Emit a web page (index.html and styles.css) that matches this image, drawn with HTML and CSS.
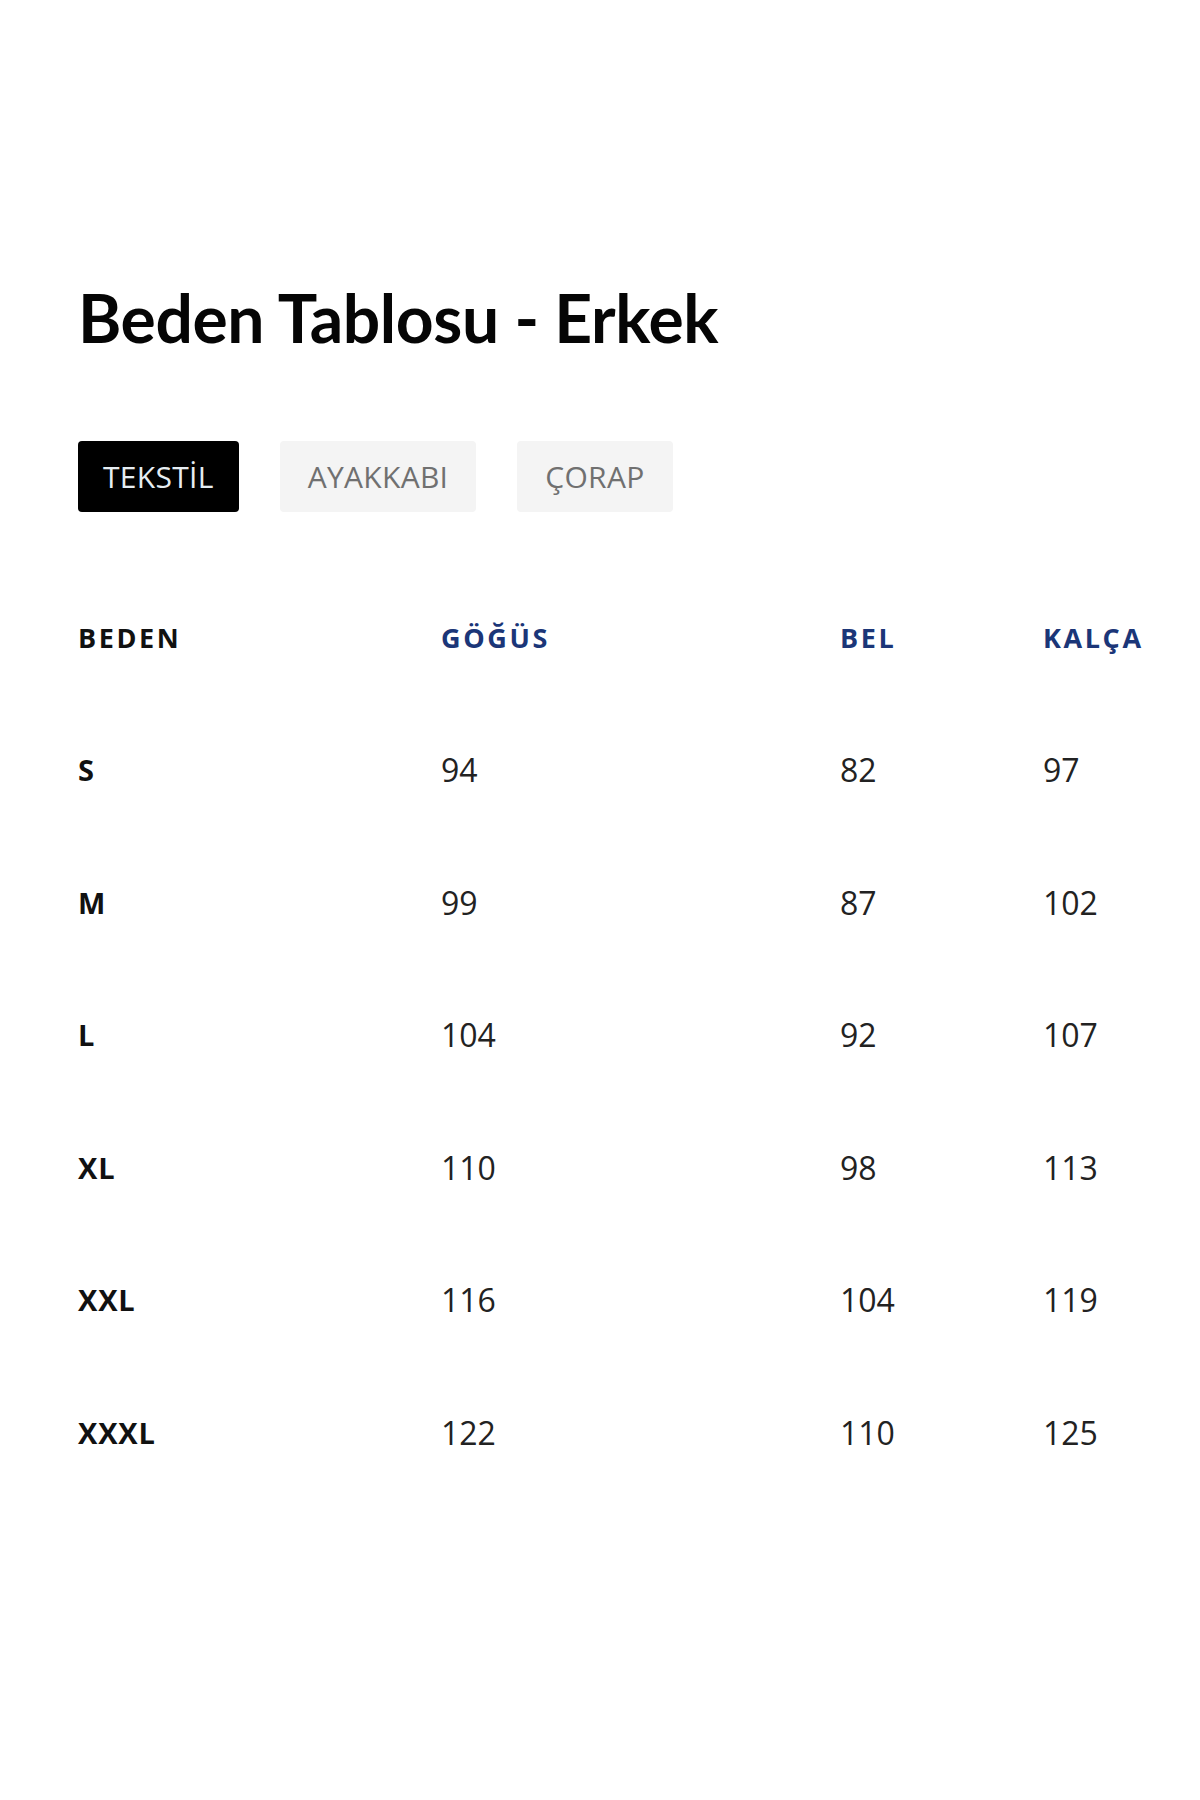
FILE: index.html
```html
<!DOCTYPE html>
<html lang="tr">
<head>
<meta charset="utf-8">
<title>Beden Tablosu - Erkek</title>
<link rel="stylesheet" href="styles.css">
</head>
<body>
<div class="page">
  <h1 class="title">Beden Tablosu - Erkek</h1>
  <div class="tabs">
    <button class="tab tab-active">TEKSTİL</button>
    <button class="tab">AYAKKABI</button>
    <button class="tab">ÇORAP</button>
  </div>
  <div class="table">
    <div class="row row-head">
      <div class="cell head-size">BEDEN</div>
      <div class="cell head">GÖĞÜS</div>
      <div class="cell head">BEL</div>
      <div class="cell head">KALÇA</div>
    </div>
    <div class="row"><div class="cell size">S</div><div class="cell num">94</div><div class="cell num">82</div><div class="cell num">97</div></div>
    <div class="row"><div class="cell size">M</div><div class="cell num">99</div><div class="cell num">87</div><div class="cell num">102</div></div>
    <div class="row"><div class="cell size">L</div><div class="cell num">104</div><div class="cell num">92</div><div class="cell num">107</div></div>
    <div class="row"><div class="cell size">XL</div><div class="cell num">110</div><div class="cell num">98</div><div class="cell num">113</div></div>
    <div class="row"><div class="cell size">XXL</div><div class="cell num">116</div><div class="cell num">104</div><div class="cell num">119</div></div>
    <div class="row"><div class="cell size">XXXL</div><div class="cell num">122</div><div class="cell num">110</div><div class="cell num">125</div></div>
  </div>
</div>
</body>
</html>
```
FILE: styles.css
```css
html, body {
  margin: 0;
  padding: 0;
  background: #ffffff;
}
body {
  font-family: "Open Sans", "Liberation Sans", sans-serif;
  color: #111;
}
.page {
  padding: 285px 0 0 78px;
}
.title {
  margin: 0;
  font-family: "Lato", "Open Sans", sans-serif;
  font-weight: 700;
  font-size: 66px;
  line-height: 1;
  color: #050505;
  letter-spacing: -0.4px;
}
.tabs {
  display: flex;
  gap: 41px;
  margin-top: 90px;
}
.tab {
  height: 71px;
  padding: 0 28px;
  border: none;
  border-radius: 4px;
  background: #f4f4f4;
  color: #707070;
  font-family: "Open Sans", sans-serif;
  font-size: 30px;
  font-weight: 400;
  letter-spacing: 0.3px;
}
.tab-active {
  padding: 0 25px;
  background: #000;
  color: #e6edf2;
}
.table {
  margin-top: 59px;
}
.row {
  display: grid;
  grid-template-columns: 363px 399px 203px 1fr;
  height: 132.5px;
  align-items: center;
}
.cell {
  white-space: nowrap;
}
.head-size, .head {
  font-family: "Open Sans", sans-serif;
  font-weight: 700;
  font-size: 27px;
  letter-spacing: 2.6px;
  color: #111;
}
.head {
  color: #1b3678;
}
.size {
  font-family: "Open Sans", sans-serif;
  font-weight: 700;
  font-size: 29px;
  letter-spacing: 0.8px;
  color: #111;
}
.num {
  font-family: "Open Sans", sans-serif;
  font-weight: 400;
  font-size: 32px;
  color: #222;
}
```
